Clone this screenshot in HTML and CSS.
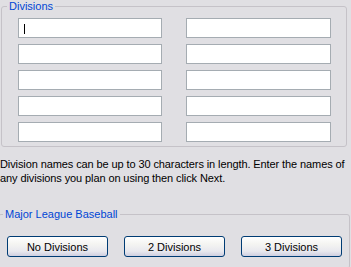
FILE: index.html
```html
<!doctype html>
<html>
<head lang="en">
    <meta charset="UTF-8">
    <title>Divisions</title>
    <link rel="stylesheet" href="styles.css">
</head>
<body>
<div class="wrap">
    <fieldset class="group divisions">
        <legend>Divisions</legend>
        <div class="fields">
            <div class="field">
                <input type="text">
                <span class="caret"></span>
            </div>
            <input type="text">
            <input type="text">
            <input type="text">
            <input type="text">
            <input type="text">
            <input type="text">
            <input type="text">
            <input type="text">
            <input type="text">
        </div>
    </fieldset>

    <p class="hint">Division names can be up to 30 characters in length. Enter the names of any divisions you plan on using then click Next.</p>

    <fieldset class="group league">
        <legend>Major League Baseball</legend>
        <div class="buttons">
            <button type="button">No Divisions</button>
            <button type="button">2 Divisions</button>
            <button type="button">3 Divisions</button>
        </div>
    </fieldset>
</div>
</body>
</html>
```

FILE: styles.css
```css
* {
    padding: 0;
    margin: 0;
    box-sizing: border-box;
}

html, body {
    background: #e0dfe3;
}

body {
    font-family: "Liberation Sans", Arial, sans-serif;
    font-size: 11px;
    color: #000;
}

.wrap {
    width: 351px;
    height: 267px;
    overflow: hidden;
}

.group {
    border: 1px solid #c5c2c8;
    border-radius: 3px;
    padding: 0;
}

.group legend {
    color: #0046d5;
    font-size: 11px;
    line-height: 13px;
    padding: 0 2px;
}

.divisions {
    width: 346px;
    margin-left: 1px;
}

.divisions legend {
    margin-left: 5px;
}

.fields {
    display: grid;
    grid-template-columns: 144px 145px;
    column-gap: 24px;
    row-gap: 6px;
    padding: 5px 14px 4px 16px;
}

.fields input {
    display: block;
    width: 100%;
    height: 20px;
    border: 1px solid #a5acb2;
    background: #fff;
    outline: none;
    font-family: inherit;
    font-size: 11px;
    padding: 0 4px;
}

.field {
    position: relative;
}

.caret {
    position: absolute;
    left: 6px;
    top: 6px;
    width: 1px;
    height: 10px;
    background: #000;
}

.hint {
    margin-top: 10px;
    line-height: 14px;
    width: 351px;
    letter-spacing: -0.1px;
}

.league {
    width: 352px;
    margin-left: -2px;
    margin-top: 23px;
    height: 61px;
}

.league legend {
    margin-left: 4px;
}

.buttons {
    display: flex;
    gap: 16px;
    padding: 15px 0 0 8px;
}

.buttons button {
    width: 101px;
    height: 21px;
    border: 1px solid #003c74;
    border-radius: 3px;
    background: linear-gradient(to bottom, #ffffff 0%, #f5f5f2 35%, #e8e8ee 75%, #cfcfe0 100%);
    font-family: inherit;
    font-size: 11px;
    color: #000;
    padding-top: 1px;
}
```
